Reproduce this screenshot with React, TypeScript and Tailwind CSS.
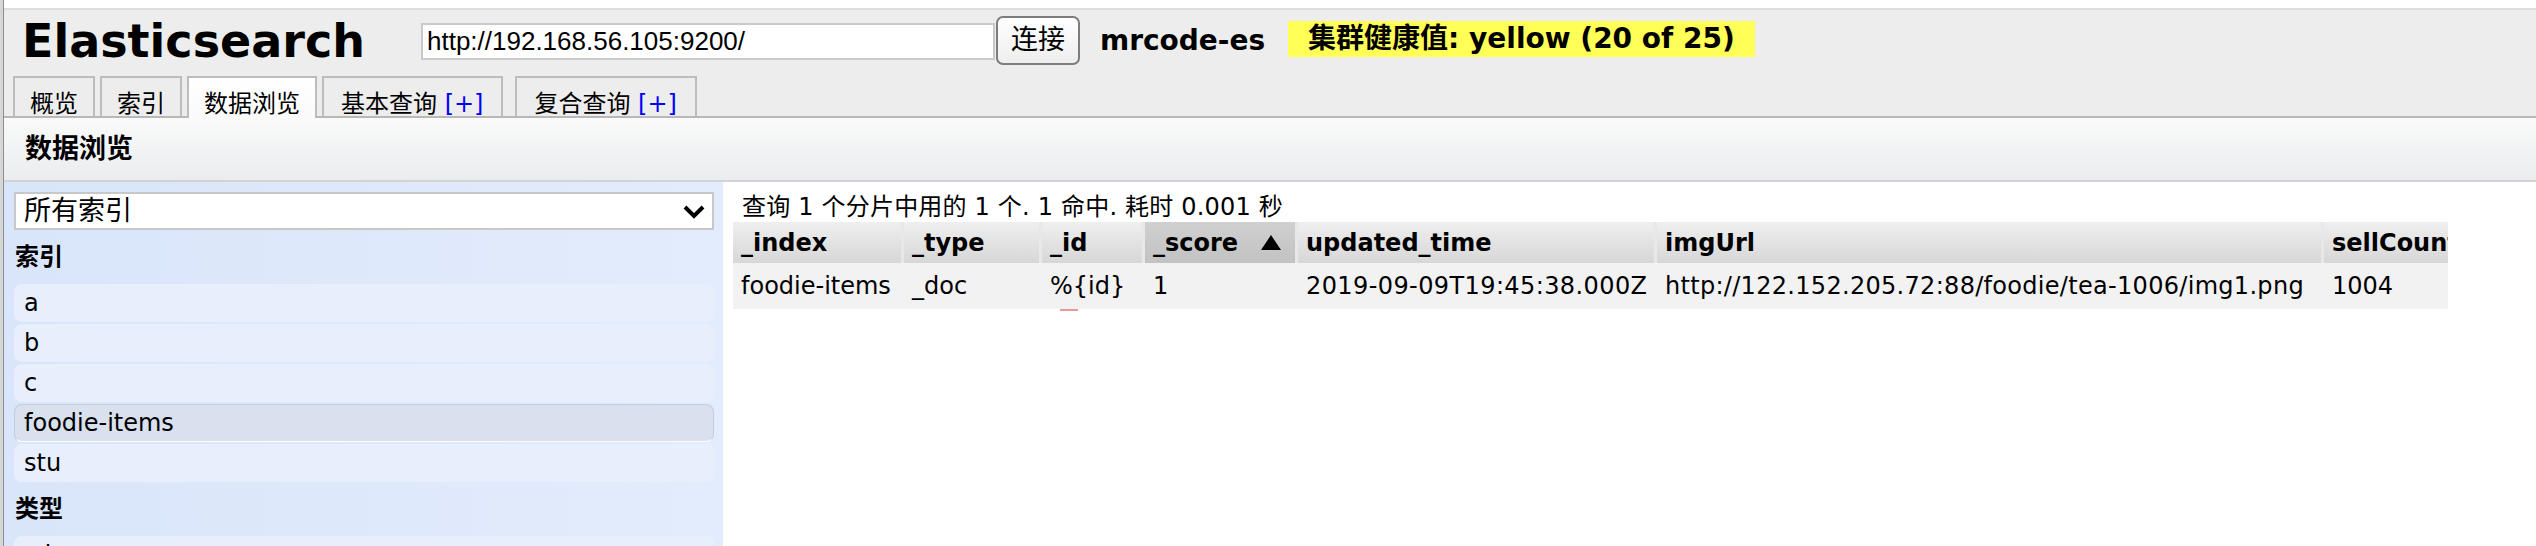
import React from "react";

const DV = "font-['DejaVu_Sans','Noto_Sans_CJK_SC',sans-serif]";
const SYS = "font-['Liberation_Sans','Noto_Sans_CJK_SC',sans-serif]";

const cols = [
  { h: "_index", v: "foodie-items", w: "w-[168px]", first: true, t: "" },
  { h: "_type", v: "_doc", w: "w-[138px]", t: "" },
  { h: "_id", v: "%{id}", w: "w-[103px]", t: "" },
  { h: "_score", v: "1", w: "w-[153px]", sorted: true, t: "" },
  { h: "updated_time", v: "2019-09-09T19:45:38.000Z", w: "w-[359px]", t: "tracking-[0.4px]" },
  { h: "imgUrl", v: "http://122.152.205.72:88/foodie/tea-1006/img1.png", w: "w-[667px]", t: "tracking-[0.3px]" },
  { h: "sellCount", v: "1004", w: "w-[170px]", t: "" },
];

function Tab({ label, plus, active, wide }: { label: string; plus?: boolean; active?: boolean; wide?: boolean }) {
  return (
    <div
      className={
        active
          ? "shrink-0 h-[42px] -mb-[2px] relative z-10 border-2 border-b-0 border-[#bdbdbd] bg-linear-to-b from-white to-[#f9faf9] px-[15px] pt-[14px] text-[24px] leading-[24px] text-black whitespace-nowrap"
          : wide
          ? "shrink-0 h-[40px] border-2 border-b-0 border-[#bdbdbd] bg-[#ededed] pl-[17px] pr-[18px] pt-[14px] text-[24px] leading-[24px] text-black whitespace-nowrap"
          : "shrink-0 h-[40px] border-2 border-b-0 border-[#bdbdbd] bg-[#ededed] px-[15px] pt-[14px] text-[24px] leading-[24px] text-black whitespace-nowrap"
      }
    >
      {label}
      {plus && <span className="text-[#0000ff]"> [+]</span>}
    </div>
  );
}

function Item({ label, selected }: { label: string; selected?: boolean }) {
  return (
    <div
      className={
        selected
          ? "shrink-0 h-[38px] rounded-[8px] bg-[#d8e1ed] border border-[#c3cedd] border-b-white flex items-center pl-[9px] text-[24px] text-black"
          : "shrink-0 h-[38px] rounded-[8px] bg-[#e7effd] flex items-center pl-[10px] text-[24px] text-black"
      }
    >
      {label}
    </div>
  );
}

export default function App() {
  return (
    <div className={`${DV} w-[2536px] h-[546px] overflow-hidden flex bg-white`}>
      <div className="w-[4px] shrink-0 bg-[#d6d6d6] border-r border-[#8e8e8e]" />
      <div className="flex-1 flex flex-col min-w-0">
        <div className="h-[8px] bg-white shrink-0" />
        {/* header */}
        <div className="shrink-0 bg-[#ededed] border-t-2 border-[#dcdbe0] border-b-2 border-b-[#b8b8b8]">
          <div className="h-[61px] flex items-center pl-[18px]">
            <div className="text-[46px] leading-none font-bold text-black whitespace-nowrap">Elasticsearch</div>
            <div
              className={`${SYS} ml-[56px] mt-[2px] w-[574px] h-[37px] border-2 border-[#c9c9c9] bg-white flex items-center pl-[4px] text-[26px] text-black whitespace-nowrap`}
            >
              http://192.168.56.105:9200/
            </div>
            <div
              className={`${SYS} ml-[1px] w-[84px] h-[49px] rounded-[7px] border-2 border-[#7d7d7d] bg-linear-to-b from-white to-[#eeeeee] flex items-center justify-center text-[27px] text-black`}
            >
              连接
            </div>
            <div className="ml-[20px] text-[28px] font-bold text-black whitespace-nowrap">mrcode-es</div>
            <div className="ml-[23px] mb-[3px] h-[36px] bg-[#ffff57] px-[20px] flex items-center text-[28px] font-bold text-black whitespace-nowrap">
              集群健康值: yellow (20 of 25)
            </div>
          </div>
          <div className="mt-[5px] flex items-end gap-[5px] pl-[9px]">
            <Tab label="概览" />
            <Tab label="索引" />
            <Tab label="数据浏览" active />
            <Tab label="基本查询" plus wide />
            <div className="w-[2px] shrink-0" />
            <Tab label="复合查询" plus wide />
          </div>
        </div>
        {/* panel header */}
        <div className="shrink-0 h-[64px] border-b-2 border-[#d3d3d3] bg-linear-to-b from-[#f9faf9] to-[#ebecef] flex items-center pl-[21px]">
          <div className="text-[27px] font-bold text-black">数据浏览</div>
        </div>
        {/* body */}
        <div className="flex-1 flex min-h-0">
          <div className="w-[719px] shrink-0 bg-linear-to-r from-[#d9e5fa] to-[#e3ecfc] pl-[10px] pr-[9px] pt-[10px] flex flex-col">
            <div
              className={`${SYS} shrink-0 h-[38px] border-2 border-[#c8c8c8] bg-white flex items-center justify-between pl-[8px] pr-[6px] text-[27px] text-black`}
            >
              <span>所有索引</span>
              <svg width="24" height="15" viewBox="0 0 24 15">
                <polyline points="3,3 12,12 21,3" fill="none" stroke="black" strokeWidth="4" />
              </svg>
            </div>
            <div className="shrink-0 h-[54px] flex items-center pl-[1px] text-[24px] font-bold text-black">索引</div>
            <div className="shrink-0 flex flex-col gap-[2px]">
              <Item label="a" />
              <Item label="b" />
              <Item label="c" />
              <Item label="foodie-items" selected />
              <Item label="stu" />
            </div>
            <div className="shrink-0 h-[54px] flex items-center pl-[1px] text-[24px] font-bold text-black">类型</div>
            <div className="shrink-0 flex flex-col gap-[2px]">
              <Item label="_doc" />
            </div>
          </div>
          <div className="flex-1 min-w-0 bg-white pl-[10px] pt-[10px]">
            <div className="h-[30px] flex items-center pl-[9px] text-[24px] tracking-[0.2px] text-black whitespace-nowrap">
              查询 1 个分片中用的 1 个. 1 命中. 耗时 0.001 秒
            </div>
            <div className="w-[1715px] overflow-hidden">
              <div className="flex w-max">
                {cols.map((c) => (
                  <div
                    key={c.h}
                    className={`${c.w} shrink-0 h-[41px] flex items-center justify-between pl-[8px] pr-[14px] text-[24px] font-bold text-black whitespace-nowrap ${
                      c.first ? "" : "border-l-[3px] border-[#e8e8e8]"
                    } ${c.sorted ? "bg-linear-to-b from-[#d0d0d0] to-[#c2c2c2]" : "bg-linear-to-b from-[#efefef] to-[#d7d7d7]"}`}
                  >
                    <span>{c.h}</span>
                    {c.sorted && (
                      <svg width="20" height="15" viewBox="0 0 20 15">
                        <polygon points="10,0 20,15 0,15" fill="black" />
                      </svg>
                    )}
                  </div>
                ))}
              </div>
              <div className="flex w-max bg-[#f2f2f2]">
                {cols.map((c) => (
                  <div
                    key={c.h}
                    className={`${c.w} ${c.t} shrink-0 h-[46px] flex items-center pl-[8px] text-[24px] text-black whitespace-nowrap ${
                      c.first ? "" : "border-l-[3px] border-transparent"
                    }`}
                  >
                    {c.v}
                  </div>
                ))}
              </div>
            </div>
            <div className="ml-[327px] w-[18px] h-[2px] bg-[#e8999c]" />
          </div>
        </div>
      </div>
    </div>
  );
}
